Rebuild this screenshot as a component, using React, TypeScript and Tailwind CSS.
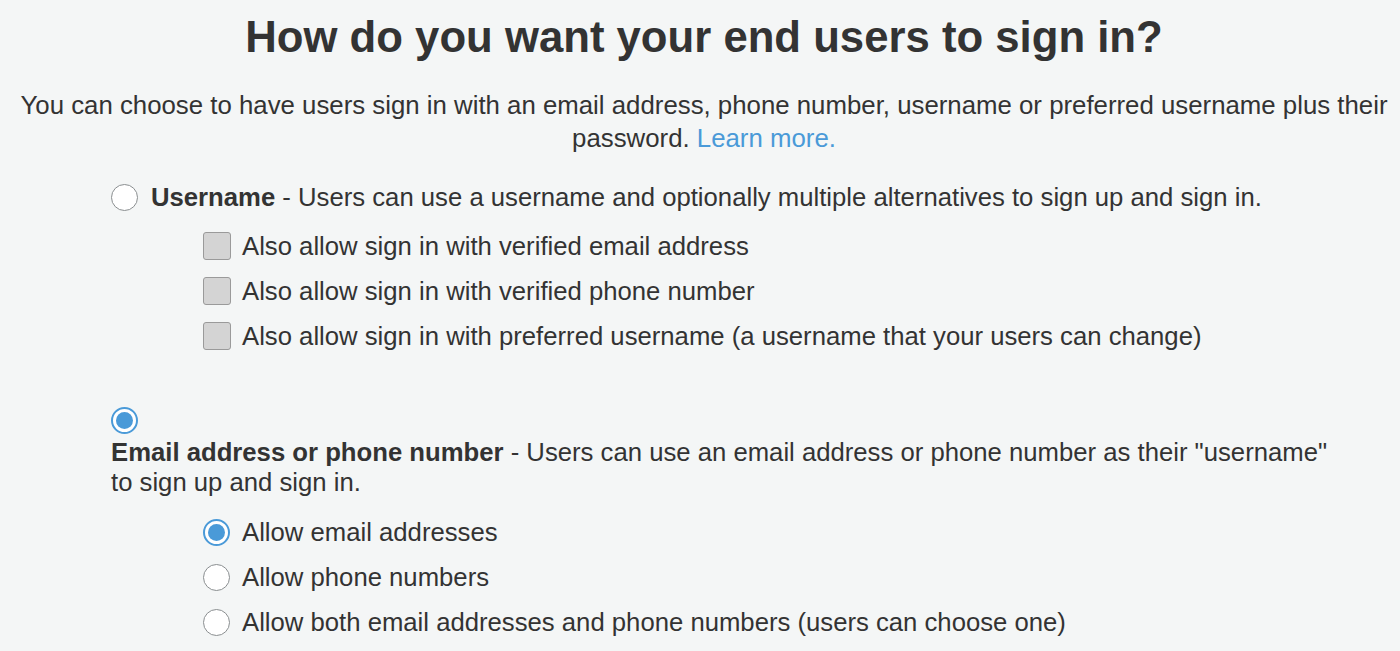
const font = { fontFamily: '"Liberation Sans", Arial, sans-serif' };

function Radio({ checked }: { checked?: boolean }) {
  return checked ? (
    <span className="flex h-[27px] w-[27px] shrink-0 items-center justify-center rounded-full border-[2px] border-[#4a9ad8] bg-white">
      <span className="h-[17px] w-[17px] rounded-full bg-[#4a9ad8]" />
    </span>
  ) : (
    <span className="h-[27px] w-[27px] shrink-0 rounded-full border-[1.5px] border-[#8a8e90] bg-white" />
  );
}

function Checkbox() {
  return <span className="h-[28px] w-[28px] shrink-0 rounded-[3px] border-[1.5px] border-[#9a9a9a] bg-[#d4d4d4]" />;
}

export default function App() {
  return (
    <div className="h-[651px] w-[1400px] overflow-hidden bg-[#f4f6f6] text-[#333]" style={font}>
      <div className="pl-[8px]">
        <h1 className="pt-[12px] text-center text-[43.7px] font-bold leading-[50px] text-[#333]">
          How do you want your end users to sign in?
        </h1>
        <p className="mx-auto mt-[27px] w-[1385px] text-center text-[25.8px] leading-[33px]">
          You can choose to have users sign in with an email address, phone number, username or preferred username plus their
          password. <a className="text-[#4a9ad8]">Learn more.</a>
        </p>
      </div>

      <div className="ml-[111px] mt-[27px] w-[1260px] text-[25.7px] leading-[30px]">
        <div className="flex items-center gap-[13px]">
          <Radio />
          <span>
            <b>Username</b> - Users can use a username and optionally multiple alternatives to sign up and sign in.
          </span>
        </div>
        <div className="ml-[92px] mt-[19px] flex flex-col gap-[15px]">
          <label className="flex items-center gap-[11px]">
            <Checkbox />
            <span>Also allow sign in with verified email address</span>
          </label>
          <label className="flex items-center gap-[11px]">
            <Checkbox />
            <span>Also allow sign in with verified phone number</span>
          </label>
          <label className="flex items-center gap-[11px]">
            <Checkbox />
            <span>Also allow sign in with preferred username (a username that your users can change)</span>
          </label>
        </div>

        <div className="mt-[56px]">
          <Radio checked />
          <p className="mt-[3px]">
            <b>Email address or phone number</b> - Users can use an email address or phone number as their "username"
            <br />
            to sign up and sign in.
          </p>
        </div>
        <div className="ml-[92px] mt-[20px] flex flex-col gap-[15px]">
          <label className="flex items-center gap-[12px]">
            <Radio checked />
            <span>Allow email addresses</span>
          </label>
          <label className="flex items-center gap-[12px]">
            <Radio />
            <span>Allow phone numbers</span>
          </label>
          <label className="flex items-center gap-[12px]">
            <Radio />
            <span>Allow both email addresses and phone numbers (users can choose one)</span>
          </label>
        </div>
      </div>
    </div>
  );
}
